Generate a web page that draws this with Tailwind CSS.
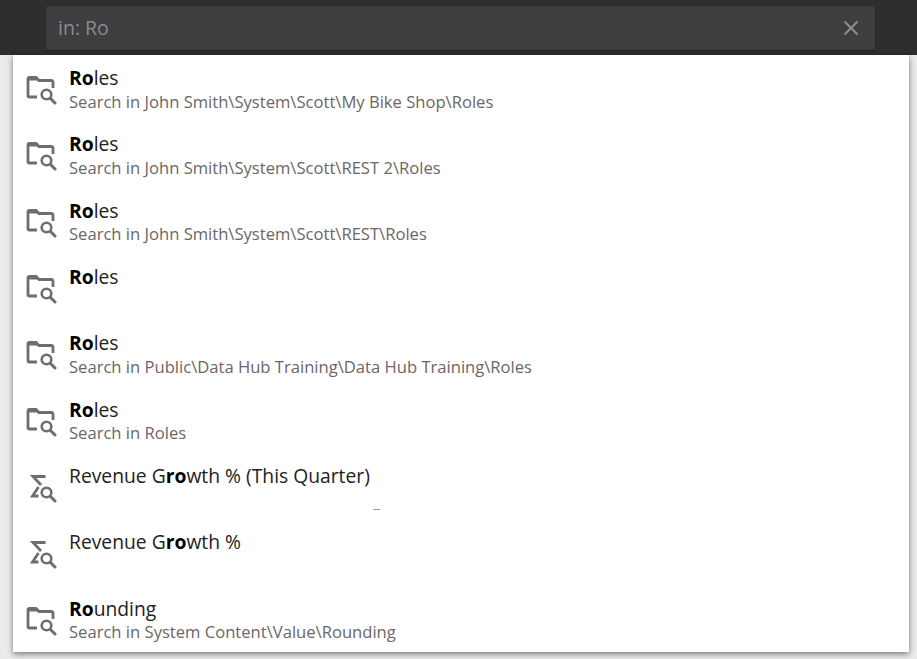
<!DOCTYPE html>
<html lang="en">
<head>
    <meta charset="UTF-8" />
    <meta name="viewport" content="width=device-width, initial-scale=1.0" />
    <script src="https://cdn.jsdelivr.net/npm/@tailwindcss/browser@4"></script>
    <title>Search</title>
</head>
<body class="h-[659px] overflow-hidden bg-[#ebebeb] font-['Open_Sans',sans-serif]">
    <svg class="hidden">
        <symbol id="folder" viewBox="0 0 32 32">
            <path d="M12 23H4.500A1.500 1.500 0 0 1 3 21.500V5a1.500 1.500 0 0 1 1.500-1.500H11l3 3h12.500A1.500 1.500 0 0 1 28 8v6" fill="none" stroke="#6e6e6e" stroke-width="2.800" />
            <path d="M3 5a1.500 1.500 0 0 1 1.500-1.500H11l3 3H3z" fill="#6e6e6e" />
            <circle cx="21.500" cy="20.500" r="4.800" fill="none" stroke="#6e6e6e" stroke-width="2.600" />
            <path d="M25.500 24.500l4.500 4.500" stroke="#6e6e6e" stroke-width="3" stroke-linecap="round" />
        </symbol>
        <symbol id="sigma" viewBox="0 0 32 32">
            <path d="M20.500 4.500H8l8 8.500M13.500 15l-6 9h6" fill="none" stroke="#6e6e6e" stroke-width="2.800" />
            <circle cx="21.500" cy="20.500" r="4.800" fill="none" stroke="#6e6e6e" stroke-width="2.600" />
            <path d="M25.500 24.500l4.500 4.500" stroke="#6e6e6e" stroke-width="3" stroke-linecap="round" />
        </symbol>
    </svg>

    <div class="h-[55px] bg-[#2e2d2f] px-[46px] pt-[6px]">
        <div class="flex h-[44px] w-[829px] items-center justify-between rounded-[2px] bg-[#3e3d40] pl-[12px] pr-[16px] shadow-[0_1px_2px_rgba(0,0,0,0.3)]">
            <span class="text-[19.500px] text-[#8b8a8c]">in: Ro</span>
            <svg class="h-[16px] w-[16px]" viewBox="0 0 16 16"><path d="M1.500 1.500l13 13M14.500 1.500l-13 13" stroke="#8f8e90" stroke-width="2" /></svg>
        </div>
    </div>

    <ul class="relative ml-[13px] h-[597px] w-[896px] bg-white shadow-[0_2px_6px_rgba(0,0,0,0.5)]">
        <li class="flex h-[66.350px] items-start">
            <svg class="ml-[12px] mt-[19px] h-[32px] w-[32px] shrink-0"><use href="#folder" /></svg>
            <div class="ml-[12px] pt-[9px]">
                <p class="text-[19.300px] leading-[28px] text-[#222]"><b class="text-black">Ro</b>les</p>
                <p class="-mt-[0.280px] text-[16.600px] leading-[20px] text-[#6b6668]">Search in John Smith\System\Scott\My Bike Shop\Roles</p>
            </div>
        </li>
        <li class="flex h-[66.350px] items-start">
            <svg class="ml-[12px] mt-[19px] h-[32px] w-[32px] shrink-0"><use href="#folder" /></svg>
            <div class="ml-[12px] pt-[9px]">
                <p class="text-[19.300px] leading-[28px] text-[#222]"><b class="text-black">Ro</b>les</p>
                <p class="-mt-[0.280px] text-[16.600px] leading-[20px] text-[#6b6668]">Search in John Smith\System\Scott\REST 2\Roles</p>
            </div>
        </li>
        <li class="flex h-[66.350px] items-start">
            <svg class="ml-[12px] mt-[19px] h-[32px] w-[32px] shrink-0"><use href="#folder" /></svg>
            <div class="ml-[12px] pt-[9px]">
                <p class="text-[19.300px] leading-[28px] text-[#222]"><b class="text-black">Ro</b>les</p>
                <p class="-mt-[0.280px] text-[16.600px] leading-[20px] text-[#6b6668]">Search in John Smith\System\Scott\REST\Roles</p>
            </div>
        </li>
        <li class="flex h-[66.350px] items-start">
            <svg class="ml-[12px] mt-[19px] h-[32px] w-[32px] shrink-0"><use href="#folder" /></svg>
            <div class="ml-[12px] pt-[9px]">
                <p class="text-[19.300px] leading-[28px] text-[#222]"><b class="text-black">Ro</b>les</p>
            </div>
        </li>
        <li class="flex h-[66.350px] items-start">
            <svg class="ml-[12px] mt-[19px] h-[32px] w-[32px] shrink-0"><use href="#folder" /></svg>
            <div class="ml-[12px] pt-[9px]">
                <p class="text-[19.300px] leading-[28px] text-[#222]"><b class="text-black">Ro</b>les</p>
                <p class="-mt-[0.280px] text-[16.600px] leading-[20px] text-[#6b6668]">Search in Public\Data Hub Training\Data Hub Training\Roles</p>
            </div>
        </li>
        <li class="flex h-[66.350px] items-start">
            <svg class="ml-[12px] mt-[19px] h-[32px] w-[32px] shrink-0"><use href="#folder" /></svg>
            <div class="ml-[12px] pt-[9px]">
                <p class="text-[19.300px] leading-[28px] text-[#222]"><b class="text-black">Ro</b>les</p>
                <p class="-mt-[0.280px] text-[16.600px] leading-[20px] text-[#6b6668]">Search in Roles</p>
            </div>
        </li>
        <li class="flex h-[66.350px] items-start">
            <svg class="ml-[12px] mt-[19px] h-[32px] w-[32px] shrink-0"><use href="#sigma" /></svg>
            <div class="ml-[12px] pt-[9px]">
                <p class="text-[19.300px] leading-[28px] text-[#222]">Revenue G<b class="text-black">ro</b>wth % (This Quarter)</p>
            </div>
        </li>
        <li class="flex h-[66.350px] items-start">
            <svg class="ml-[12px] mt-[19px] h-[32px] w-[32px] shrink-0"><use href="#sigma" /></svg>
            <div class="ml-[12px] pt-[9px]">
                <p class="text-[19.300px] leading-[28px] text-[#222]">Revenue G<b class="text-black">ro</b>wth %</p>
            </div>
        </li>
        <li class="flex h-[66.350px] items-start">
            <svg class="ml-[12px] mt-[19px] h-[32px] w-[32px] shrink-0"><use href="#folder" /></svg>
            <div class="ml-[12px] pt-[9px]">
                <p class="text-[19.300px] leading-[28px] text-[#222]"><b class="text-black">Ro</b>unding</p>
                <p class="-mt-[0.280px] text-[16.600px] leading-[20px] text-[#6b6668]">Search in System Content\Value\Rounding</p>
            </div>
        </li>
        <span class="absolute left-[360px] top-[454px] h-[1px] w-[7px] bg-[#9a9a9a]"></span>
    </ul>
</body>
</html>
